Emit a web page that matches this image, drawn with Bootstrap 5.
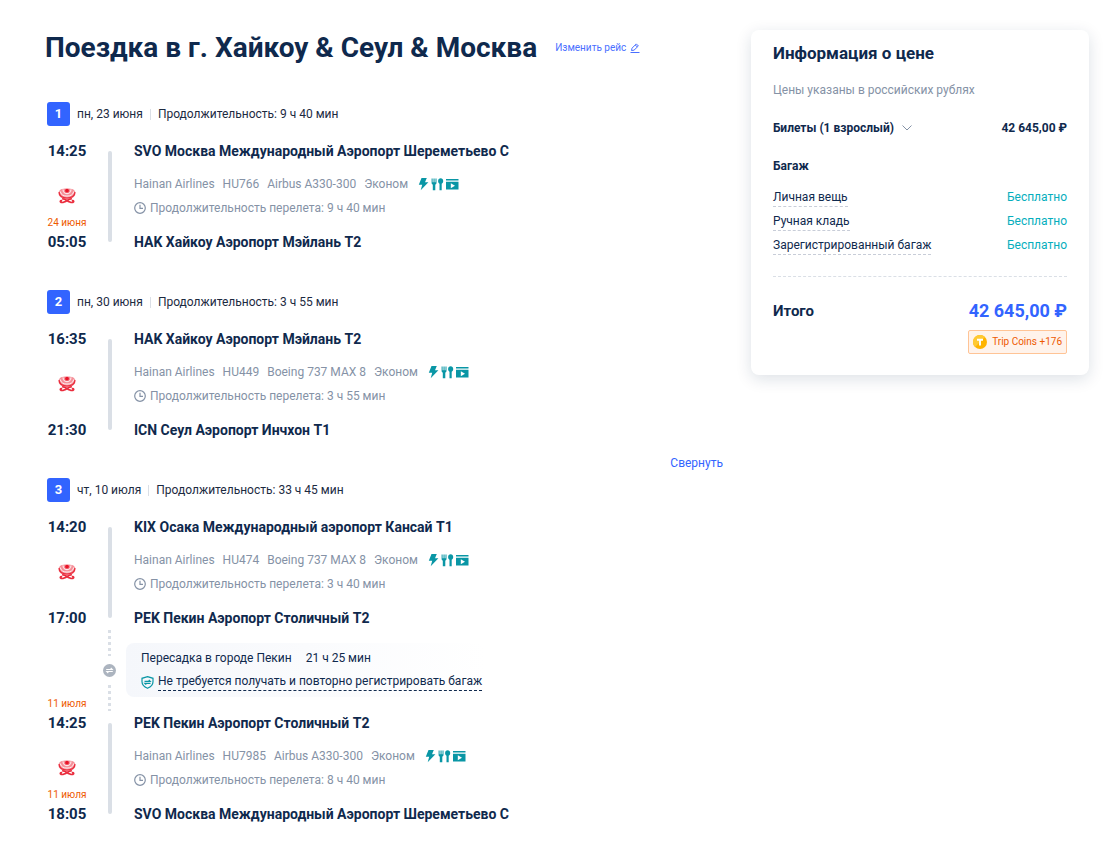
<!DOCTYPE html>
<html lang="ru">
<head>
<meta charset="utf-8">
<meta name="viewport" content="width=device-width, initial-scale=1">
<title>Поездка в г. Хайкоу &amp; Сеул &amp; Москва</title>
<link href="https://cdn.jsdelivr.net/npm/bootstrap@5.3.0/dist/css/bootstrap.min.css" rel="stylesheet">
<style>
  :root { --ink: #0f294d; --muted: #8592a6; --brand: #3264ff; --teal: #0996a5; --rail: #dadfe6; }
  body { font-family: Roboto, "Liberation Sans", sans-serif; font-size: 12px; line-height: 24px; color: var(--ink); background: #fff; }
  .page { padding: 30px 22px 30px 45px; }
  .trip-title { font-size: 28px; line-height: 36px; font-weight: 700; }
  .edit-link { font-size: 10px; color: #4a6fff; text-decoration: none; }
  .trip-head { gap: 18px; margin-bottom: 36px; }
  .leg { margin-bottom: 36px; }
  .leg-head { gap: 7px; padding-left: 2px; color: #1c2a3f; }
  .leg-no { width: 23px; height: 24px; border-radius: 3px; background: var(--brand); color: #fff; font-size: 13px; font-weight: 700; }
  .leg-sep { width: 1px; height: 11px; background: #dadfe6; }
  .leg-body { margin-top: 13px; }
  .time-col { width: 44px; text-align: center; }
  .rail-col { width: 41px; }
  .clock-time { font-size: 15px; font-weight: 700; }
  .carrier { height: 67px; padding-top: 25px; }
  .carrier svg { display: block; margin: 0 auto 11px; }
  .next-day { font-size: 10px; line-height: 15px; color: #ee5a00; }
  .rail { width: 4px; border-radius: 2px; background: var(--rail); margin: 12px 0; }
  .station { font-size: 14px; font-weight: 700; }
  .flight-info { margin: 9px 0 10px; }
  .muted-text { color: var(--muted); }
  .flight-line { gap: 8px; }
  .amenities { margin-left: 2px; }
  .dots { width: 3px; height: 26px; background: repeating-linear-gradient(var(--rail) 0 3px, transparent 3px 6px); }
  .transfer { margin: 13px 0 14px -8px; padding: 3px 0 3px 15px; width: 360px; border-radius: 8px; background: linear-gradient(90deg, #f5f7fb, #fff); }
  .transfer-line { gap: 14px; }
  .baggage-line { height: 24px; }
  .baggage-note { line-height: 17px; color: var(--ink); text-decoration: none; border-bottom: 1px dashed var(--ink); }
  .collapse-row { margin-top: -36px; padding: 9px 4px 3px 0; }
  .plain-btn { border: 0; padding: 0; background: none; color: inherit; line-height: 24px; }
  .plain-btn.fold { color: var(--brand); }
  .price-side { width: 338px; }
  .price-card { padding: 10px 22px 21px; border-radius: 8px; box-shadow: 0 4px 16px rgba(15, 41, 77, .14); background: #fff; }
  .price-title { font-size: 17px; line-height: 26px; font-weight: 700; margin-bottom: 12px; }
  .price-row { margin-bottom: 14px; }
  .fee-head { margin-bottom: 7px; }
  .fee-name { line-height: 18px; color: var(--ink); text-decoration: none; border-bottom: 1px dashed #c8cdd8; }
  .free { color: #06aebd; }
  .cut { border-top: 1px dashed #dadfe6; margin: 19px 0 22px; }
  .total-label { font-size: 15px; font-weight: 700; }
  .total-sum { font-size: 18px; font-weight: 700; color: var(--brand); }
  .coins-row { margin-top: 7px; }
  .coins { height: 24px; padding: 0 4px; gap: 5px; font-size: 10px; color: #ee5a00; background: #fff3eb; border: 1px solid #ffc496; border-radius: 2px; }
</style>
</head>
<body>
<svg class="d-none" aria-hidden="true">
  <symbol id="hainan" viewBox="0 0 18 16">
    <path fill="#f58f98" d="M2.600 1.600C.6 3 .1 5.200.9 7.200c1.300 2.800 4.600 3.700 8.100 3.700s6.800-.9 8.100-3.700c.8-2 .3-4.200-1.700-5.600-1.700-.9-4-1.100-6.400-1.100s-4.700.2-6.400 1.100Z"/>
    <path fill="none" stroke="#fff" stroke-width=".9" d="M2.300 3.500c.5 3.300 3.300 4.600 6.700 4.600s6.200-1.300 6.700-4.600M5 1.400c0 3 1.800 4.300 4 4.300s4-1.300 4-4.300"/>
    <path fill="none" stroke="#ea2c3d" stroke-width="1.200" d="M1.100 4c-.2 4 3.400 6 7.900 6s8.100-2 7.900-6"/>
    <circle cx="9" cy="2.700" r="1.900" fill="#e81428"/>
    <path fill="none" stroke="#ea2c3d" stroke-width="1.700" stroke-linecap="round" d="M4.800 10.800c3 0 3.800 2.200 7 3.200 1.500.6 3 .6 3.700-.1.400-.7-.1-1.500-.9-1.300M13.200 10.800c-3 0-3.800 2.200-7 3.200-1.500.6-3 .6-3.700-.1-.4-.7.100-1.500.9-1.300"/>
  </symbol>
  <symbol id="clock" viewBox="0 0 12 12"><g fill="none" stroke="#8592a6" stroke-width="1.200"><circle cx="6" cy="6" r="5.300"/><path d="M6 2.700v3.600h3"/></g></symbol>
  <symbol id="perks" viewBox="0 0 41 14">
    <g fill="#0996a5">
      <path d="M3.500 1h5.300L7 5.300h3.400L2.700 13.200l1.500-5.400H.8Z"/>
      <path d="M13.600 1.500h1v3.800h.9V1.500h1.100v3.800h.9V1.500h1v4.300c0 1-.6 1.600-1.200 1.900v5.500h-2.500V7.700c-.7-.3-1.200-.9-1.200-1.900Z"/>
      <path d="M22.700 1.300c1.400 0 2.500 1.100 2.500 2.700 0 1.300-.6 2.300-1.500 2.800v6.400h-2.200V6.800c-.8-.5-1.400-1.500-1.400-2.800 0-1.600 1.100-2.700 2.600-2.700Z"/>
      <path d="M28 2h12.500v1.500H28ZM28 4.700h12.500v7.800H28Z"/>
    </g>
    <path fill="#fff" d="M32.800 6.200 37 8.700l-4.200 2.500Z"/>
  </symbol>
</svg>

<div class="page d-flex flex-wrap flex-lg-nowrap align-items-start">
  <main class="flex-grow-1">
    <div class="trip-head d-flex flex-wrap align-items-center">
      <h1 class="trip-title mb-0">Поездка в г. Хайкоу &amp; Сеул &amp; Москва</h1>
      <a href="#" class="edit-link d-inline-flex align-items-center gap-1">Изменить рейс
        <svg width="10" height="10" viewBox="0 0 10 10" fill="none" stroke="#4a6fff"><path d="M1.500 7.500 2 5.200 6.300.9 8.400 3 4 7.200ZM.5 9.500h9M5.300 2l2 2"/></svg>
      </a>
    </div>

    <section class="leg">
      <div class="leg-head d-flex align-items-center">
        <span class="leg-no d-flex justify-content-center align-items-center">1</span>
        <span>пн, 23 июня</span><span class="leg-sep"></span><span>Продолжительность: 9 ч 40 мин</span>
      </div>
      <div class="leg-body">
        <div class="d-flex">
          <div class="time-col"><div class="clock-time">14:25</div>
            <div class="carrier"><svg width="18" height="16"><use href="#hainan"/></svg><div class="next-day text-nowrap">24 июня</div></div>
            <div class="clock-time">05:05</div></div>
          <div class="rail-col d-flex justify-content-center"><span class="rail"></span></div>
          <div class="ps-1"><div class="station">SVO Москва Международный Аэропорт Шереметьево C</div>
            <div class="flight-info muted-text">
              <div class="flight-line d-flex flex-wrap align-items-center"><span>Hainan Airlines</span><span>HU766</span><span>Airbus A330-300</span><span>Эконом</span><span class="amenities d-flex"><svg width="41" height="14"><use href="#perks"/></svg></span></div>
              <div class="d-flex align-items-center gap-1"><svg width="12" height="12"><use href="#clock"/></svg>Продолжительность перелета: 9 ч 40 мин</div>
            </div>
            <div class="station">HAK Хайкоу Аэропорт Мэйлань T2</div></div>
        </div>
      </div>
    </section>

    <section class="leg">
      <div class="leg-head d-flex align-items-center">
        <span class="leg-no d-flex justify-content-center align-items-center">2</span>
        <span>пн, 30 июня</span><span class="leg-sep"></span><span>Продолжительность: 3 ч 55 мин</span>
      </div>
      <div class="leg-body">
        <div class="d-flex">
          <div class="time-col"><div class="clock-time">16:35</div>
            <div class="carrier"><svg width="18" height="16"><use href="#hainan"/></svg></div>
            <div class="clock-time">21:30</div></div>
          <div class="rail-col d-flex justify-content-center"><span class="rail"></span></div>
          <div class="ps-1"><div class="station">HAK Хайкоу Аэропорт Мэйлань T2</div>
            <div class="flight-info muted-text">
              <div class="flight-line d-flex flex-wrap align-items-center"><span>Hainan Airlines</span><span>HU449</span><span>Boeing 737 MAX 8</span><span>Эконом</span><span class="amenities d-flex"><svg width="41" height="14"><use href="#perks"/></svg></span></div>
              <div class="d-flex align-items-center gap-1"><svg width="12" height="12"><use href="#clock"/></svg>Продолжительность перелета: 3 ч 55 мин</div>
            </div>
            <div class="station">ICN Сеул Аэропорт Инчхон T1</div></div>
        </div>
      </div>
    </section>

    <div class="collapse-row d-flex justify-content-end"><button type="button" class="plain-btn fold">Свернуть</button></div>

    <section class="leg mb-0">
      <div class="leg-head d-flex align-items-center">
        <span class="leg-no d-flex justify-content-center align-items-center">3</span>
        <span>чт, 10 июля</span><span class="leg-sep"></span><span>Продолжительность: 33 ч 45 мин</span>
      </div>
      <div class="leg-body">
        <div class="d-flex">
          <div class="time-col"><div class="clock-time">14:20</div>
            <div class="carrier"><svg width="18" height="16"><use href="#hainan"/></svg></div>
            <div class="clock-time">17:00</div></div>
          <div class="rail-col d-flex justify-content-center"><span class="rail"></span></div>
          <div class="ps-1"><div class="station">KIX Осака Международный аэропорт Кансай T1</div>
            <div class="flight-info muted-text">
              <div class="flight-line d-flex flex-wrap align-items-center"><span>Hainan Airlines</span><span>HU474</span><span>Boeing 737 MAX 8</span><span>Эконом</span><span class="amenities d-flex"><svg width="41" height="14"><use href="#perks"/></svg></span></div>
              <div class="d-flex align-items-center gap-1"><svg width="12" height="12"><use href="#clock"/></svg>Продолжительность перелета: 3 ч 40 мин</div>
            </div>
            <div class="station">PEK Пекин Аэропорт Столичный T2</div></div>
        </div>

        <div class="d-flex">
          <div class="time-col d-flex flex-column justify-content-end"><div class="next-day text-nowrap">11 июля</div></div>
          <div class="rail-col d-flex flex-column align-items-center justify-content-between">
            <span class="dots"></span>
            <svg width="13" height="13" viewBox="0 0 13 13"><circle cx="6.500" cy="6.500" r="6.500" fill="#acb4bf"/><path d="M3.200 5.500h6L7.700 4M9.800 7.500h-6L5.300 9" fill="none" stroke="#fff" stroke-width="1.100"/></svg>
            <span class="dots"></span>
          </div>
          <div class="ps-1"><div class="transfer">
            <div class="transfer-line d-flex"><span>Пересадка в городе Пекин</span><span>21 ч 25 мин</span></div>
            <div class="baggage-line d-flex align-items-center gap-1"><svg class="flex-shrink-0" width="13" height="13" viewBox="0 0 13 13" fill="none" stroke="#0996a5" stroke-width="1.200"><path d="M6.500.7 12 2.300v3.500c0 3.200-2.300 5.200-5.500 6.500C3.300 11 1 9 1 5.800V2.300Z"/><path d="M3.500 5.300h5.700L7.800 3.900M9.500 7.300H3.800l1.400 1.400"/></svg><a href="#" class="baggage-note text-nowrap">Не требуется получать и повторно регистрировать багаж</a></div>
          </div></div>
        </div>

        <div class="d-flex">
          <div class="time-col"><div class="clock-time">14:25</div>
            <div class="carrier"><svg width="18" height="16"><use href="#hainan"/></svg><div class="next-day text-nowrap">11 июля</div></div>
            <div class="clock-time">18:05</div></div>
          <div class="rail-col d-flex justify-content-center"><span class="rail"></span></div>
          <div class="ps-1"><div class="station">PEK Пекин Аэропорт Столичный T2</div>
            <div class="flight-info muted-text">
              <div class="flight-line d-flex flex-wrap align-items-center"><span>Hainan Airlines</span><span>HU7985</span><span>Airbus A330-300</span><span>Эконом</span><span class="amenities d-flex"><svg width="41" height="14"><use href="#perks"/></svg></span></div>
              <div class="d-flex align-items-center gap-1"><svg width="12" height="12"><use href="#clock"/></svg>Продолжительность перелета: 8 ч 40 мин</div>
            </div>
            <div class="station">SVO Москва Международный Аэропорт Шереметьево C</div></div>
        </div>
      </div>
    </section>
  </main>

  <aside class="price-side flex-shrink-0 ms-lg-4">
    <div class="price-card">
      <h2 class="price-title">Информация о цене</h2>
      <p class="muted-text price-row">Цены указаны в российских рублях</p>
      <div class="price-row d-flex justify-content-between fw-bold">
        <button type="button" class="plain-btn fw-bold d-flex align-items-center gap-2">Билеты (1 взрослый)
          <svg width="10" height="6" viewBox="0 0 10 6" fill="none" stroke="#8592a6"><path d="m.5.500 4.500 4.500L9.500.5"/></svg></button>
        <span>42 645,00 ₽</span>
      </div>
      <div class="fee-head fw-bold">Багаж</div>
      <div class="d-flex justify-content-between align-items-center"><a href="#" class="fee-name">Личная вещь</a><span class="free">Бесплатно</span></div>
      <div class="d-flex justify-content-between align-items-center"><a href="#" class="fee-name">Ручная кладь</a><span class="free">Бесплатно</span></div>
      <div class="d-flex justify-content-between align-items-center"><a href="#" class="fee-name">Зарегистрированный багаж</a><span class="free">Бесплатно</span></div>
      <div class="cut"></div>
      <div class="d-flex justify-content-between"><span class="total-label">Итого</span><span class="total-sum">42 645,00 ₽</span></div>
      <div class="coins-row d-flex justify-content-end">
        <span class="coins d-inline-flex align-items-center"><svg width="14" height="14" viewBox="0 0 14 14"><circle cx="7" cy="7" r="7" fill="#ffb400"/><path d="M2 2a7 7 0 0 1 10 0L2 12a7 7 0 0 1 0-10Z" fill="#ffc933"/><path d="M4 4.800h6M7 4.800V10.500" stroke="#fff" stroke-width="1.900"/></svg>Trip Coins +176</span>
      </div>
    </div>
  </aside>
</div>
<script src="https://cdn.jsdelivr.net/npm/bootstrap@5.3.0/dist/js/bootstrap.bundle.min.js"></script>
</body>
</html>
